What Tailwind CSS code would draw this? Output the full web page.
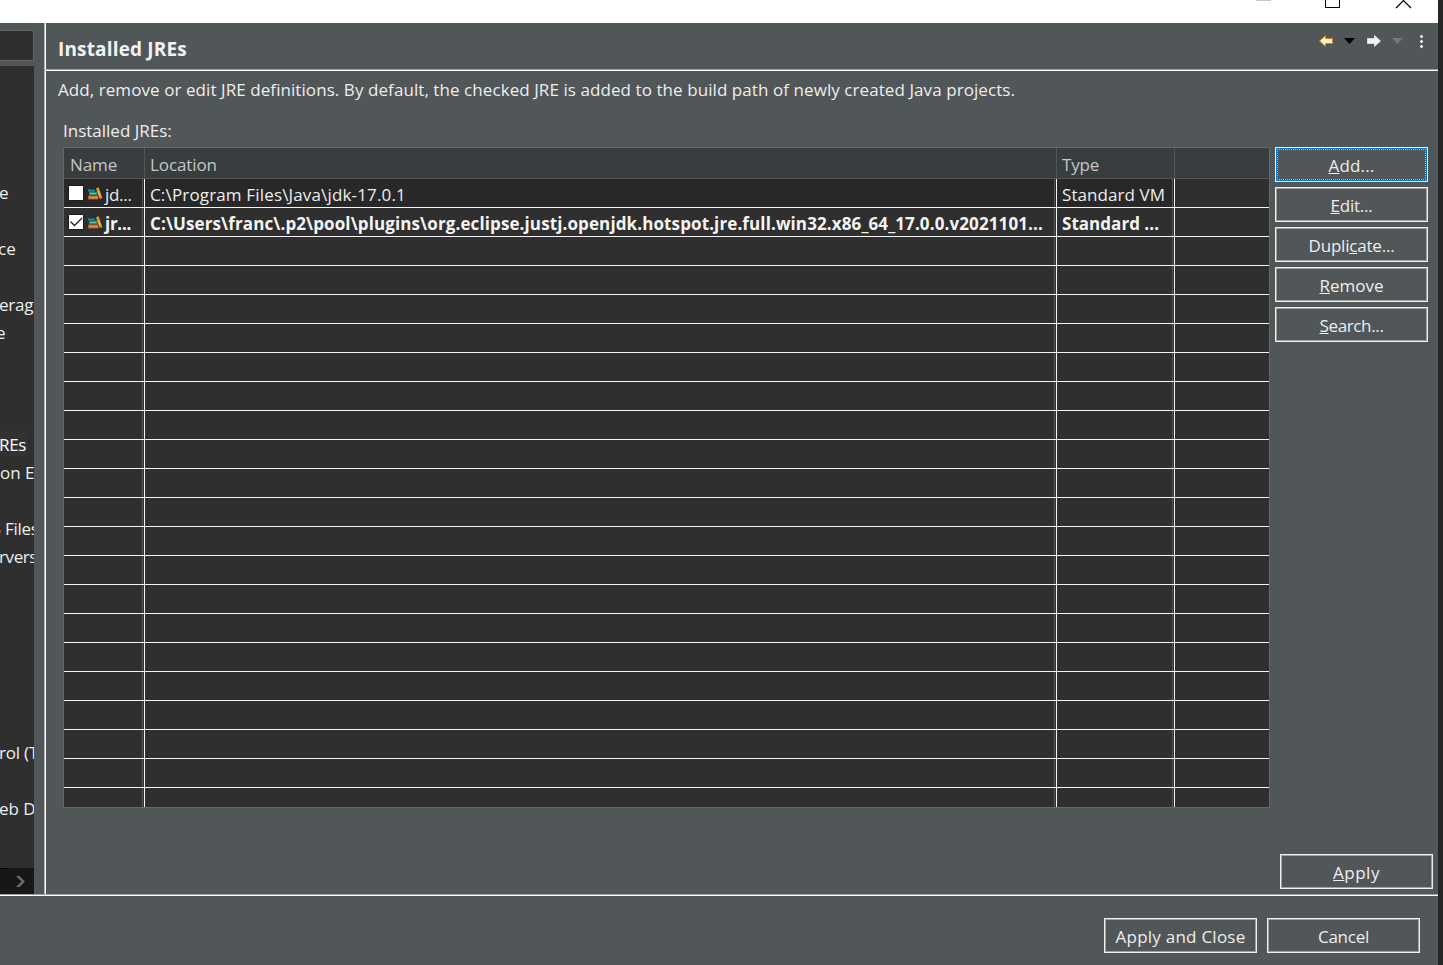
<!DOCTYPE html>
<html lang="en">
<head>
<meta charset="utf-8">
<title>Preferences</title>
<script src="https://cdn.jsdelivr.net/npm/@tailwindcss/browser@4"></script>
</head>
<body class="w-[1443px] h-[965px] overflow-hidden bg-[#262626] font-['Open_Sans',sans-serif] text-[17px] leading-[24px] text-[#eeeeee] whitespace-nowrap">
<div class="flex flex-col w-[1443px] h-[965px]">
  <!-- title bar -->
  <header class="w-[1438px] h-[23px] bg-white shrink-0 flex justify-end">
    <svg class="w-[190px] h-[23px]" viewBox="1248 0 190 23" fill="none" shape-rendering="crispEdges">
      <path d="M1256 .5h15" stroke="#c8c8c8"/>
      <path d="M1325.5 -6.500h14v14h-14z" stroke="#000"/>
      <path d="M1396 8l7.500-7.500 7.500 7.500" stroke="#000" stroke-width="1.200" shape-rendering="auto"/>
    </svg>
  </header>

  <div class="flex w-[1438px] h-[871px] shrink-0 bg-[#515658]">
    <!-- filter and preference tree -->
    <aside class="w-[44px] shrink-0 flex flex-col">
      <div class="mt-[7px] w-[34px] h-[31px] bg-[#2f2f2f] border-y border-r border-[#666666] shrink-0"></div>
      <nav class="mt-[5px] w-[34px] h-[802px] bg-[#2f2f2f] overflow-hidden pt-[113px] shrink-0 leading-[28px]">
        <div class="h-[56px] -ml-px">e</div>
        <div class="h-[56px] -ml-[2px]">ce</div>
        <div class="h-[28px] -ml-px tracking-[-0.2px]">erag</div>
        <div class="h-[112px] -ml-[4px]">e</div>
        <div class="h-[28px] flex"><span class="w-[29px] h-[25px] leading-[28px] bg-[#323232] tracking-[-0.3px] text-white -ml-px">REs</span></div>
        <div class="h-[56px]">on E</div>
        <div class="h-[28px] flex"><span class="w-[5px] shrink-0 pt-[15px]"><span class="block w-px h-[3px] bg-[#a0452c]"></span></span><span class="tracking-[-0.3px]">Files</span></div>
        <div class="h-[196px] tracking-[-0.4px] -ml-px">rvers</div>
        <div class="h-[56px] -ml-px tracking-[-0.2px]">rol (T</div>
        <div class="h-[28px] -ml-px">eb D</div>
      </nav>
      <div class="w-[34px] h-[26px] bg-[#171717] shrink-0">
        <svg class="w-[34px] h-[26px]" viewBox="0 0 34 26" fill="none"><path d="M0 .5h8" stroke="#000"/><path d="M16 8h3.500l5.500 5.500-5.500 5.500H16l5.500-5.500z" fill="#6e6e6e"/></svg>
      </div>
    </aside>
    <div class="w-[2px] shrink-0 border-l border-[#b0b0b0] bg-white"></div>

    <!-- page -->
    <main class="w-[1392px] flex flex-col">
      <div class="h-[48px] shrink-0 border-b border-white flex flex-col">
        <div class="h-[47px] border-b border-[#a0a0a0] flex justify-between pl-[12px]">
          <h1 class="pt-[14px] text-[19px] leading-[24px] font-bold tracking-[0.16px] text-[#f2f2f2]">Installed JREs</h1>
          <svg class="w-[128px] h-[40px]" viewBox="1310 23 128 40">
            <path d="M1319.500 41l6-5.500v3h7v5h-7v3z" fill="#fff3c4" stroke="#c8851a" stroke-linejoin="round"/>
            <path d="M1344 38h11l-5.500 6z" fill="#000"/>
            <path d="M1380.500 41l-6-5.500v3h-7v5h7v3z" fill="#f4f4f4" stroke="#dadada" stroke-linejoin="round"/>
            <path d="M1392 38h11l-5.500 6z" fill="#77787a"/>
            <g fill="#fff" stroke="#3c3c3c" stroke-width=".8"><circle cx="1421.500" cy="36.500" r="1.900"/><circle cx="1421.500" cy="41.500" r="1.900"/><circle cx="1421.500" cy="46.500" r="1.900"/></g>
          </svg>
        </div>
      </div>
      <p class="mt-[7px] ml-[12px] tracking-[0.073px]">Add, remove or edit JRE definitions. By default, the checked JRE is added to the build path of newly created Java projects.</p>
      <p class="mt-[17px] ml-[17px]">Installed JREs:</p>

      <div class="mt-[4px] ml-[17px] flex gap-[5px] h-[661px] shrink-0">
        <!-- table -->
        <section class="w-[1207px] h-[661px] border border-[#666666] bg-[#2f2f2f] overflow-hidden shrink-0">
          <div class="grid grid-cols-[81px_912px_118px_94px] grid-rows-[30px] h-[31px] bg-[#383d3f] border-b border-[#555555] text-[#c6c6c6] leading-[33px]">
            <div class="border-r border-[#555555] pl-[6px] tracking-[-0.1px]">Name</div>
            <div class="border-r border-[#555555] pl-[5px] tracking-[-0.1px]">Location</div>
            <div class="border-r border-[#555555] pl-[5px] tracking-[-0.2px]">Type</div>
            <div></div>
          </div>
          <div id="rows">
            <div class="grid grid-cols-[81px_912px_118px_94px] grid-rows-[28px] h-[29px] border-b border-[#f4f4f4] leading-[31px]">
              <div class="border-r border-[#f4f4f4] bg-[#282828]"><div class="mr-px h-full border-r border-[#555555] flex">
                <svg class="w-[40px] h-[28px] shrink-0" viewBox="64 179 40 28"><path d="M68.500 185.500h15v15h-15z" fill="#fff" stroke="#1c1c1c"/><use href="#books" x="88" y="187"/></svg>
                <span class="tracking-[-0.3px] pl-px">jd...</span></div></div>
              <div class="border-r border-[#f4f4f4] bg-[#282828]"><div class="mr-px h-full border-r border-[#555555] pl-[5px] tracking-[0.159px]">C:\Program Files\Java\jdk-17.0.1</div></div>
              <div class="border-r border-[#f4f4f4] bg-[#282828]"><div class="mr-px h-full border-r border-[#555555] pl-[5px] tracking-[0.064px]">Standard VM</div></div>
              <div></div>
            </div>
            <div class="grid grid-cols-[81px_912px_118px_94px] grid-rows-[28px] h-[29px] border-b border-[#f4f4f4] leading-[31px] font-bold text-[#f4f4f4]">
              <div class="border-r border-[#f4f4f4]"><div class="mr-px h-full border-r border-[#555555] flex">
                <svg class="w-[40px] h-[28px] shrink-0" viewBox="64 208 40 28"><path d="M68.500 214.500h15v15h-15z" fill="#fff" stroke="#1c1c1c"/><path d="M70.500 221.500l4 4 7.500-7.500" fill="none" stroke="#222" stroke-width="1.300"/><use href="#books" x="88" y="216"/></svg>
                <span class="tracking-[-0.29px] pl-px">jr...</span></div></div>
              <div class="border-r border-[#f4f4f4]"><div class="mr-px h-full border-r border-[#555555] pl-[5px] tracking-[0.112px]">C:\Users\franc\.p2\pool\plugins\org.eclipse.justj.openjdk.hotspot.jre.full.win32.x86_64_17.0.0.v2021101...</div></div>
              <div class="border-r border-[#f4f4f4]"><div class="mr-px h-full border-r border-[#555555] pl-[5px] tracking-[0.03px]">Standard ...</div></div>
              <div></div>
            </div>
          </div>
        </section>
        <!-- actions -->
        <div class="flex flex-col gap-[5px]">
          <button class="w-[153px] h-[35px] border border-[#f0f0f0] bg-[#0078d7] p-px"><span class="block h-[31px] border border-dotted border-[#c0b4a8] bg-[#515658] leading-[31px] tracking-[0.17px]"><u class="underline-offset-1">A</u>dd...</span></button>
          <button class="w-[153px] h-[35px] border border-[#f0f0f0]"><span class="block h-[33px] border border-[#a0a0a0] leading-[33px] tracking-[-0.23px]"><u class="underline-offset-1">E</u>dit...</span></button>
          <button class="w-[153px] h-[35px] border border-[#f0f0f0]"><span class="block h-[33px] border border-[#a0a0a0] leading-[33px] tracking-[-0.2px]">Dupli<u class="underline-offset-1">c</u>ate...</span></button>
          <button class="w-[153px] h-[35px] border border-[#f0f0f0]"><span class="block h-[33px] border border-[#a0a0a0] leading-[33px]"><u class="underline-offset-1">R</u>emove</span></button>
          <button class="w-[153px] h-[35px] border border-[#f0f0f0]"><span class="block h-[33px] border border-[#a0a0a0] leading-[33px] tracking-[-0.36px]"><u class="underline-offset-1">S</u>earch...</span></button>
        </div>
      </div>
      <div class="mt-[46px] pr-[5px] flex justify-end">
        <button class="w-[153px] h-[35px] border border-[#f0f0f0]"><span class="block h-[33px] border border-[#a0a0a0] leading-[33px] tracking-[0.5px]"><u class="underline-offset-1">A</u>pply</span></button>
      </div>
    </main>
  </div>

  <footer class="w-[1438px] h-[71px] shrink-0 bg-[#515658] border-t border-[#a0a0a0]">
    <div class="border-t border-white pt-[22px] pr-[18px] flex justify-end gap-[10px]">
      <button class="w-[153px] h-[35px] border border-[#f0f0f0]"><span class="block h-[33px] border border-[#a0a0a0] leading-[33px] tracking-[0.244px]">Apply and Close</span></button>
      <button class="w-[153px] h-[35px] border border-[#f0f0f0]"><span class="block h-[33px] border border-[#a0a0a0] leading-[33px] tracking-[-0.26px]">Cancel</span></button>
    </div>
  </footer>
</div>

<svg class="hidden">
  <symbol id="books" width="15" height="14" viewBox="0 0 15 14" overflow="visible">
    <path d="M0 2.500h7v2H0z" fill="#1f86b8"/>
    <path d="M1 4.500h8.500v4H1z" fill="#1d8a6c"/><path d="M2 6.500h6.500" stroke="#6cc49a" stroke-width="1.200"/>
    <path d="M0 8.500h10.500v4H0z" fill="#b3541e"/><path d="M1 10.500h9" stroke="#d8905a" stroke-width="2"/>
    <path d="M8 1.300l2.600-1 3.700 10.800-2.500 1z" fill="#e59a1c"/><path d="M10.200 4.500l1.500 4.500" stroke="#f8cf62"/>
  </symbol>
</svg>
<script>
  // empty grid rows down to the bottom edge of the table
  const rows = document.getElementById('rows');
  for (let i = 0; i < 20; i++) {
    const row = document.createElement('div');
    row.className = 'grid grid-cols-[81px_912px_118px_94px] grid-rows-[28px] h-[29px] border-b border-[#f4f4f4]';
    row.innerHTML = '<div class="border-r border-[#f4f4f4]"><div class="mr-px h-full border-r border-[#555555]"></div></div>'.repeat(3) + '<div></div>';
    rows.append(row);
  }
</script>
</body>
</html>
